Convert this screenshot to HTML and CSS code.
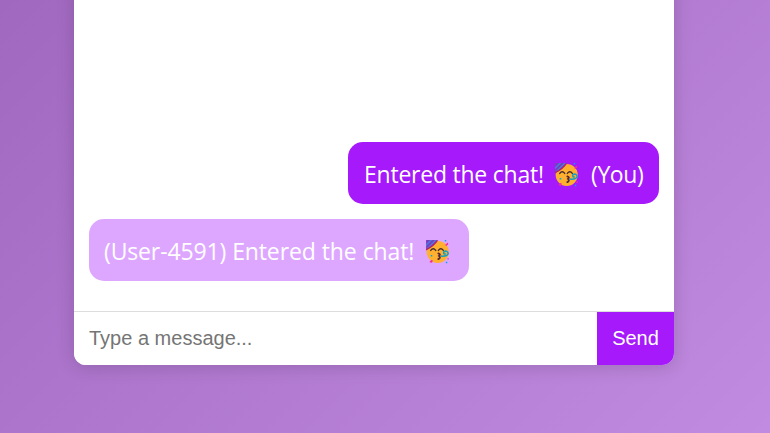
FILE: index.html
```
<!DOCTYPE html>
<html lang="en">
<head>
<meta charset="utf-8">
<title>Chat</title>
<link rel="stylesheet" href="styles.css">
</head>
<body>
<svg width="0" height="0" class="defs" aria-hidden="true">
  <symbol id="party" viewBox="0 0 24 24">
    <circle cx="12.2" cy="12.4" r="10.6" fill="#ffb02e"/>
    <path d="M1 1H12Q8.5 7 1 10.5Z" fill="#7a3fb8"/>
    <path d="M1 5L5 1H7L1 7ZM1 9.5L9.5 1H11.5L1 11Z" fill="#4b7ae8"/>
    <path d="M1 9.3Q7 7 11.2 1.3H12.8Q8.8 7.7 1 11Z" fill="#b4236f"/>
    <path d="M5.5 11Q7.9 7.7 10.3 11M12.8 11Q15.2 7.7 17.6 11" fill="none" stroke="#402a32" stroke-width="1.3" stroke-linecap="round"/>
    <path d="M12.8 13.8Q15.4 14.5 13.4 16.2Q15.4 17.9 12.8 19.3" fill="none" stroke="#5b2634" stroke-width="1.8" stroke-linecap="round"/>
    <path d="M15 16.4Q21.5 17 22.3 13.8Q21.6 10.8 18.2 12Q17.2 14.5 20 14.4" fill="none" stroke="#159fc5" stroke-width="1.5"/>
    <path d="M19.3 5.8L21.8 3.4L22.4 5L20.5 6.8ZM4.2 22.4L5.8 20.2L7.6 20.7L6.7 22.7Z" fill="#f52f91"/>
    <path d="M19 1h1.4v1.4H19ZM5.5 15.3h1.5v1.5H5.5ZM20 21.8h1.4v1.4H20Z" fill="#00a6ed"/>
    <path d="M21.5 18.5h1.3v1.3h-1.3Z" fill="#f52f91"/>
  </symbol>
</svg>
<main class="chat">
  <div class="messages">
    <div class="message own"><span class="entered">Entered the chat!</span><svg class="emoji" role="img" aria-label="Partying face"><use href="#party"/></svg><span class="you">(You)</span></div>
    <div class="message other"><span class="user">(User-4591) Entered the chat!</span><svg class="emoji" role="img" aria-label="Partying face"><use href="#party"/></svg></div>
  </div>
  <form class="composer">
    <input class="field" type="text" placeholder="Type a message...">
    <button class="send" type="button">Send</button>
  </form>
</main>
</body>
</html>
```
FILE: styles.css
```
* { box-sizing: border-box; }
body {
  margin: 0;
  height: 433px;
  overflow: hidden;
  display: flow-root;
  background: linear-gradient(135deg, #a168c0, #c18be1);
  font-family: "Segoe UI", "Open Sans", "Noto Sans", sans-serif;
}
.defs { display: block; }
.chat {
  width: 600px;
  height: 425px;
  margin: -60px 0 0 74px;
  display: flex;
  flex-direction: column;
  background: #fff;
  border-radius: 12px;
  box-shadow: 0 2px 18px rgba(0, 0, 0, 0.16);
  overflow: hidden;
}
.messages {
  flex: 1;
  display: flex;
  flex-direction: column;
  justify-content: flex-end;
  gap: 15px;
  padding: 0 15px 30px;
}
.message {
  height: 62px;
  padding: 2px 15px 0;
  display: flex;
  align-items: center;
  border-radius: 15px;
  color: #fff;
  font-size: 23px;
  line-height: 32px;
  white-space: nowrap;
}
.own { width: 311px; align-self: flex-end; background: #a519fa; }
.other { width: 380px; background: #dea7ff; }
.entered { width: 191px; letter-spacing: -0.23px; text-indent: 1px; }
.user { width: 321px; letter-spacing: -0.14px; word-spacing: 0.3px; }
.you { margin-left: 12px; letter-spacing: -0.4px; }
.emoji { width: 25px; height: 25px; flex: none; }
.composer {
  height: 54px;
  display: flex;
  border-top: 1px solid #ddd;
}
.field, .send {
  margin: 0;
  border: 0;
  border-radius: 0;
  padding: 0 15px;
  font: 20px "Liberation Sans", Arial, sans-serif;
}
.field { flex: 1; min-width: 0; background: #fff; outline: 0; }
.field::placeholder { color: #757575; }
.send { width: 77px; background: #a519fa; color: #fff; }
```
